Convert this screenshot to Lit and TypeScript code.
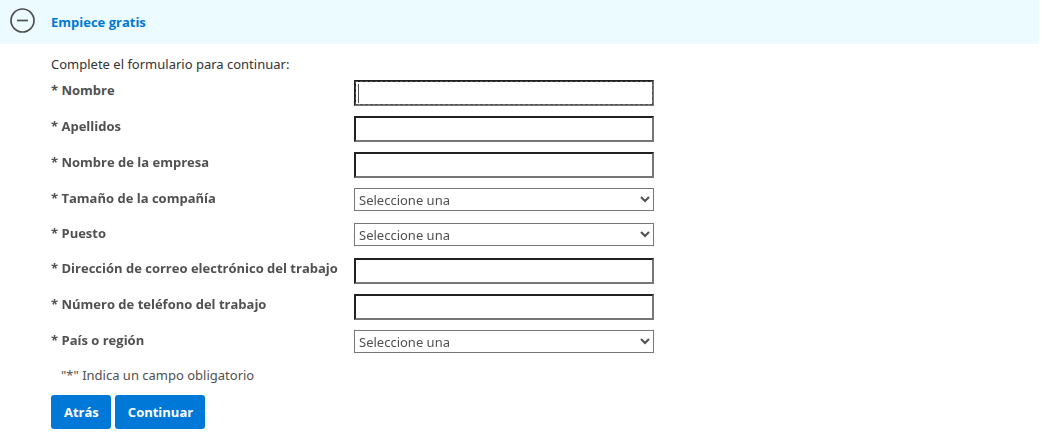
import { LitElement, html, css } from "lit";
import { customElement, state, query } from "lit/decorators.js";

interface Field {
  id: string;
  label: string;
  kind: "text" | "select";
  type?: string;
}

const FIELDS: Field[] = [
  { id: "nombre", label: "Nombre", kind: "text" },
  { id: "apellidos", label: "Apellidos", kind: "text" },
  { id: "empresa", label: "Nombre de la empresa", kind: "text" },
  { id: "tamano", label: "Tamaño de la compañía", kind: "select" },
  { id: "puesto", label: "Puesto", kind: "select" },
  { id: "correo", label: "Dirección de correo electrónico del trabajo", kind: "text", type: "email" },
  { id: "telefono", label: "Número de teléfono del trabajo", kind: "text", type: "tel" },
  { id: "pais", label: "País o región", kind: "select" },
];

@customElement("app-root")
export class AppRoot extends LitElement {
  @state() private open = true;
  @query("#nombre") private firstInput!: HTMLInputElement;

  static styles = css`
    :host {
      display: block;
      font-family: "Noto Sans", "Open Sans", sans-serif;
      font-size: 13px;
      line-height: 20px;
      color: #505050;
    }
    * { box-sizing: border-box; }
    .top { padding-right: 3px; }
    .header {
      display: flex;
      align-items: center;
      gap: 16px;
      width: 100%;
      height: 44px;
      padding: 0 10px;
      border: 0;
      background: #ebfbff;
      color: #0078d7;
      font: inherit;
      text-align: left;
    }
    .header, .label, .button {
      font-family: "Open Sans", "Noto Sans", sans-serif;
      font-weight: 700;
    }
    .icon { flex: none; margin-bottom: 3px; }
    .form { padding: 10px 51px; }
    .intro { margin: 0; color: #333; }
    .row {
      display: grid;
      grid-template-columns: 303px minmax(0, 300px);
      align-items: start;
      padding: 6px 0 4px;
    }
    .row.select { padding-bottom: 6px; }
    .input {
      width: 100%;
      height: 26px;
      margin: 0;
      padding: 0 2px;
      border: 2px inset #767676;
      border-radius: 0;
      background: #fff;
      color: inherit;
      font: inherit;
    }
    .input:focus {
      outline: 1px dashed #505050;
      outline-offset: -2px;
    }
    /* Steady caret while the focused box is empty. */
    .input:focus:placeholder-shown {
      caret-color: transparent;
      background: linear-gradient(#505050, #505050) 2px 2px / 1px 19px no-repeat #fff;
    }
    .select-box {
      width: 100%;
      height: 23px;
      padding: 0 1px 0 0;
      border: 1px solid #767676;
      border-radius: 0;
      background: #fff;
      color: #505050;
      font: inherit;
    }
    .note { margin: 6px 10px 10px; }
    .actions { display: flex; gap: 4px; }
    .button {
      height: 34px;
      padding: 0 12px 0 13px;
      border: 0;
      border-radius: 3px;
      background: #0078d7;
      color: #fff;
      font-size: 13px;
      line-height: 20px;
    }
  `;

  protected firstUpdated() {
    this.firstInput.focus();
  }

  private toggle() {
    this.open = !this.open;
  }

  render() {
    return html`
      <div class="top">
        <button class="header" type="button" aria-expanded=${this.open} @click=${this.toggle}>
          <svg class="icon" width="25" height="25" viewBox="0 0 25 25" fill="none" stroke="#505050" stroke-width="1.7">
            <circle cx="12.5" cy="12.5" r="11.5" />
            <path d="M7 12.5h11" />
          </svg>
          <span>Empiece gratis</span>
        </button>
      </div>
      <form class="form" ?hidden=${!this.open} @submit=${(e: Event) => e.preventDefault()}>
        <p class="intro">Complete el formulario para continuar:</p>
        ${FIELDS.map(
          (f) => html`<div class="row ${f.kind}">
            <label class="label" for=${f.id}>* ${f.label}</label>
            ${f.kind === "text"
              ? html`<input class="input" id=${f.id} type=${f.type ?? "text"} placeholder=" " />`
              : html`<select class="select-box" id=${f.id}><option>Seleccione una</option></select>`}
          </div>`
        )}
        <p class="note">"*" Indica un campo obligatorio</p>
        <div class="actions">
          <button class="button" type="button">Atrás</button>
          <button class="button" type="submit">Continuar</button>
        </div>
      </form>
    `;
  }
}
